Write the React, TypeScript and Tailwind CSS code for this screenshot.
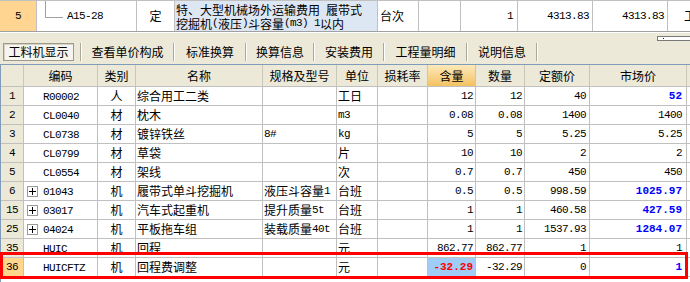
import React from "react";

const MONO = "[font-family:'Liberation_Mono',monospace] text-[11px] tracking-[-0.6px]";
const MONOB = "[font-family:'Liberation_Mono',monospace] text-[11px] font-bold tracking-[0px]";

function T({ s, bold }: { s: string; bold?: boolean }) {
  const parts = s.split(/([\x20-\x7e]+)/).filter((p) => p.length > 0);
  return (
    <>
      {parts.map((p, i) =>
        /^[\x20-\x7e]+$/.test(p) ? (
          <span key={i} className={bold ? MONOB : MONO}>
            {p}
          </span>
        ) : (
          <span key={i}>{p}</span>
        )
      )}
    </>
  );
}

type R = {
  n: string;
  code: string;
  plus?: boolean;
  cat: string;
  name: string;
  spec: string;
  unit: string;
  q: string;
  qty: string;
  price: string;
  market: string;
  blue?: boolean;
  sel?: boolean;
};

const rows: R[] = [
  { n: "1", code: "R00002", cat: "人", name: "综合用工二类", spec: "", unit: "工日", q: "12", qty: "12", price: "40", market: "52", blue: true },
  { n: "2", code: "CL0040", cat: "材", name: "枕木", spec: "", unit: "m3", q: "0.08", qty: "0.08", price: "1400", market: "1400" },
  { n: "3", code: "CL0738", cat: "材", name: "镀锌铁丝", spec: "8#", unit: "kg", q: "5", qty: "5", price: "5.25", market: "5.25" },
  { n: "4", code: "CL0799", cat: "材", name: "草袋", spec: "", unit: "片", q: "10", qty: "10", price: "2", market: "2" },
  { n: "5", code: "CL0554", cat: "材", name: "架线", spec: "", unit: "次", q: "0.7", qty: "0.7", price: "450", market: "450" },
  { n: "6", code: "01043", plus: true, cat: "机", name: "履带式单斗挖掘机", spec: "液压斗容量1", unit: "台班", q: "0.5", qty: "0.5", price: "998.59", market: "1025.97", blue: true },
  { n: "15", code: "03017", plus: true, cat: "机", name: "汽车式起重机", spec: "提升质量5t", unit: "台班", q: "1", qty: "1", price: "460.58", market: "427.59", blue: true },
  { n: "25", code: "04024", plus: true, cat: "机", name: "平板拖车组", spec: "装载质量40t", unit: "台班", q: "1", qty: "1", price: "1537.93", market: "1284.07", blue: true },
  { n: "35", code: "HUIC", cat: "机", name: "回程", spec: "", unit: "元", q: "862.77", qty: "862.77", price: "1", market: "1" },
  { n: "36", code: "HUICFTZ", cat: "机", name: "回程费调整", spec: "", unit: "元", q: "-32.29", qty: "-32.29", price: "0", market: "1", blue: true, sel: true },
];

function PlusBox() {
  return (
    <div className="ml-[3px] w-[11px] h-[11px] shrink-0 border border-[#9a9a9a] bg-white flex items-center justify-center">
      <svg width="9" height="9" viewBox="0 0 9 9">
        <path d="M1 4.5H8M4.5 1V8" stroke="#000" strokeWidth="1" />
      </svg>
    </div>
  );
}

function Row({ r }: { r: R }) {
  return (
    <div className="flex h-[19px] border-b border-[#c0c0c0] bg-white">
      <div
        className={`w-[23px] shrink-0 border-r border-[#c0c0c0] flex items-center justify-center ${
          r.sel ? "bg-[#ffd68c]" : "bg-[#ece9d8]"
        }`}
      >
        <T s={r.n} />
      </div>
      <div className="w-[74px] shrink-0 border-r border-[#c0c0c0] flex items-center">
        {r.plus ? (
          <>
            <PlusBox />
            <span className="ml-[5px]">
              <T s={r.code} />
            </span>
          </>
        ) : (
          <span className="ml-[19px]">
            <T s={r.code} />
          </span>
        )}
      </div>
      <div className="w-[38px] shrink-0 border-r border-[#c0c0c0] flex items-center justify-center">{r.cat}</div>
      <div className="w-[127px] shrink-0 border-r border-[#c0c0c0] flex items-center pl-[1px] whitespace-nowrap overflow-hidden">{r.name}</div>
      <div className="w-[74px] shrink-0 border-r border-[#c0c0c0] flex items-center pl-[1px] whitespace-nowrap overflow-hidden">
        <T s={r.spec} />
      </div>
      <div className="w-[41px] shrink-0 border-r border-[#c0c0c0] flex items-center pl-[1px] whitespace-nowrap overflow-hidden">
        <T s={r.unit} />
      </div>
      <div className="w-[50px] shrink-0 border-r border-[#c0c0c0]" />
      <div
        className={`w-[48px] shrink-0 border-r border-[#c0c0c0] flex items-center justify-end pr-[2px] ${
          r.sel ? "bg-[#9fcdf7] text-[#ff0000]" : ""
        }`}
      >
        <T s={r.q} bold={r.sel} />
      </div>
      <div className="w-[49px] shrink-0 border-r border-[#c0c0c0] flex items-center justify-end pr-[2px]">
        <T s={r.qty} />
      </div>
      <div className="w-[65px] shrink-0 border-r border-[#c0c0c0] flex items-center justify-end pr-[3px]">
        <T s={r.price} />
      </div>
      <div
        className={`w-[97px] shrink-0 border-r border-[#c0c0c0] flex items-center justify-end pr-[4px] ${
          r.blue ? "text-[#0000ff]" : ""
        }`}
      >
        <T s={r.market} bold={r.blue} />
      </div>
      <div className="flex-1 bg-white" />
    </div>
  );
}

function HeaderCell({ w, children, hot }: { w: string; children?: React.ReactNode; hot?: boolean }) {
  return (
    <div
      className={`${w} shrink-0 border-r border-[#cbc7b8] flex items-center justify-center ${
        hot ? "bg-gradient-to-b from-[#fde9b9] to-[#f3c160]" : ""
      }`}
    >
      {children}
    </div>
  );
}

export default function App() {
  return (
    <div className="relative w-[690px] h-[282px] overflow-hidden bg-[#ece9d8] text-black text-[12px] leading-none [font-family:'Noto_Sans_CJK_SC',sans-serif]">
      {/* previous grid row */}
      <div className="flex h-[32px] border-t border-[#c0c0c0] border-b border-b-[#a0a0a0] bg-white">
        <div className="w-[37px] shrink-0 border-r border-[#c0c0c0] bg-[#ffd591] flex items-center justify-center">
          <T s="5" />
        </div>
        <div className="w-[100px] shrink-0 border-r border-[#c0c0c0] flex items-center">
          <svg width="30" height="30" viewBox="0 0 30 30" className="shrink-0">
            <path d="M8.5 0V16.5H26" stroke="#a0a0a0" strokeWidth="1" fill="none" />
          </svg>
          <T s="A15-28" />
        </div>
        <div className="w-[38px] shrink-0 border-r border-[#c0c0c0] flex items-center justify-center">定</div>
        <div className="w-[203px] shrink-0 border-r border-[#c0c0c0] bg-[#dde7f4] pl-[1px] pt-[2px] flex flex-col gap-[1px] whitespace-nowrap">
          <div className="h-[13px] flex items-center">
            特、大型机械场外运输费用<span className="w-[6px]" />履带式
          </div>
          <div className="h-[13px] flex items-center">
            挖掘机<T s="(" />液压<T s=")" />斗容量<T s="(m3)" />
            <span className="w-[6px]" />
            <T s="1" />以内
          </div>
        </div>
        <div className="w-[41px] shrink-0 border-r border-[#c0c0c0] flex items-center pl-[2px]">台次</div>
        <div className="w-[42px] shrink-0 border-r border-[#c0c0c0]" />
        <div className="w-[57px] shrink-0 border-r border-[#c0c0c0] flex items-center justify-end pr-[4px]">
          <T s="1" />
        </div>
        <div className="w-[75px] shrink-0 border-r border-[#c0c0c0] flex items-center justify-end pr-[3px]">
          <T s="4313.83" />
        </div>
        <div className="w-[75px] shrink-0 border-r border-[#c0c0c0] flex items-center justify-end pr-[3px]">
          <T s="4313.83" />
        </div>
        <div className="flex-1 flex items-center pl-[16px] whitespace-nowrap overflow-hidden">工日</div>
      </div>
      <div className="h-[1px] bg-white" />

      {/* beige strip with tabs */}
      <div className="h-[31px] flex flex-col">
        <div className="h-[9px] flex justify-end items-start">
          <div className="mt-[3px] w-[33px] h-[5px] border border-[#7a7a7a] border-r-0 bg-white flex items-center">
            <div className="ml-[5px] w-[1px] h-[1px] bg-[#0000ff]" />
          </div>
        </div>
        <div className="h-[20px] flex items-center">
          <div className="ml-[3px] w-[71px] h-[18px] border border-[#9d9a8c] bg-[#f6f5ef] shadow-[inset_1px_1px_0_#d6d3c6] flex items-center justify-center">
            工料机显示
          </div>
          <div className="ml-[6px] w-[2px] h-[18px] border-l border-[#aca899] border-r border-r-white" />
          <div className="w-[91px] flex justify-center">查看单价构成</div>
          <div className="w-[2px] h-[18px] border-l border-[#aca899] border-r border-r-white" />
          <div className="w-[70px] flex justify-center">标准换算</div>
          <div className="w-[2px] h-[18px] border-l border-[#aca899] border-r border-r-white" />
          <div className="w-[66px] flex justify-center">换算信息</div>
          <div className="w-[2px] h-[18px] border-l border-[#aca899] border-r border-r-white" />
          <div className="w-[68px] flex justify-center">安装费用</div>
          <div className="w-[2px] h-[18px] border-l border-[#aca899] border-r border-r-white" />
          <div className="w-[81px] flex justify-center">工程量明细</div>
          <div className="w-[2px] h-[18px] border-l border-[#aca899] border-r border-r-white" />
          <div className="w-[68px] flex justify-center">说明信息</div>
          <div className="w-[2px] h-[18px] border-l border-[#aca899] border-r border-r-white" />
        </div>
      </div>

      {/* grid */}
      <div className="border-t border-l border-[#7f9db9] bg-white h-[300px]">
        <div className="flex h-[22px] border-b border-[#c0c0c0] bg-[#ece9d8]">
          <HeaderCell w="w-[23px]" />
          <HeaderCell w="w-[74px]">编码</HeaderCell>
          <HeaderCell w="w-[38px]">类别</HeaderCell>
          <HeaderCell w="w-[127px]">名称</HeaderCell>
          <HeaderCell w="w-[74px]">规格及型号</HeaderCell>
          <HeaderCell w="w-[41px]">单位</HeaderCell>
          <HeaderCell w="w-[50px]">损耗率</HeaderCell>
          <HeaderCell w="w-[48px]" hot>
            含量
          </HeaderCell>
          <HeaderCell w="w-[49px]">数量</HeaderCell>
          <HeaderCell w="w-[65px]">定额价</HeaderCell>
          <HeaderCell w="w-[97px]">市场价</HeaderCell>
          <div className="flex-1" />
        </div>
        {rows.map((r) => (
          <Row key={r.n} r={r} />
        ))}
      </div>

      {/* highlight box */}
      <div className="absolute left-[0px] top-[252px] w-[688px] h-[27px] border-[3px] border-[#ff0000]" />
    </div>
  );
}
